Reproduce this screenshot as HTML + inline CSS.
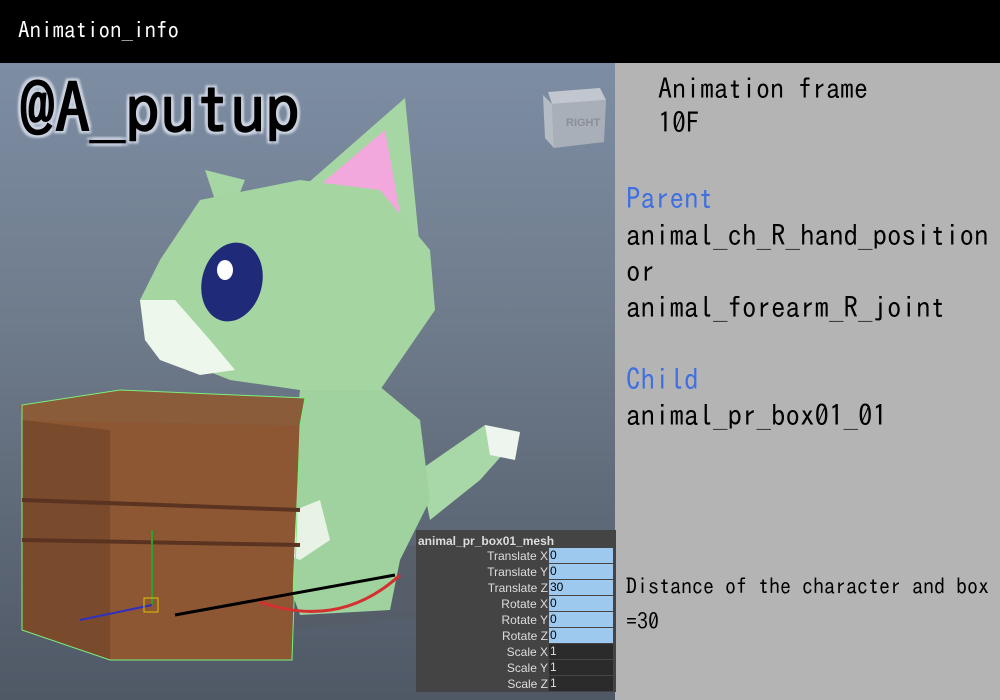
<!DOCTYPE html>
<html><head><meta charset="utf-8"><style>
*{margin:0;padding:0;box-sizing:border-box}
body{width:1000px;height:700px;overflow:hidden;background:#b4b4b4;font-family:"IPAGothic","Liberation Mono",monospace;position:relative}
#top{position:absolute;left:0;top:0;width:1000px;height:63px;background:#000;color:#fff;font-size:23px;line-height:60px;padding-left:18px}
#vp{position:absolute;left:0;top:63px;width:615px;height:637px;background:linear-gradient(#7d8da3,#6f7c8c 40%,#4f5865);overflow:hidden}
.t{position:absolute;white-space:nowrap;color:#000}
#attr{position:absolute;left:416px;top:530px;width:200px;height:162px;background:#444;font-family:"Liberation Sans",sans-serif;font-size:12px;color:#ddd}
.r{position:absolute;left:0;width:200px;height:16px}
.r span{position:absolute;right:68px;top:1px}
.r b{position:absolute;left:133px;top:0;width:64px;height:15px;line-height:15px;font-weight:normal;color:#000;padding-left:1px}
</style></head><body>
<div id="top">Animation_info</div>
<div id="vp">
<svg width="615" height="637" viewBox="0 63 615 637" style="position:absolute;left:0;top:0">
<polygon points="250,560 480,540 520,610 290,630" fill="#555c66" opacity=".6"/>
<polygon points="548,92 600,88 606,100 552,104" fill="#c2c7cf"/>
<polygon points="552,104 606,100 604,142 554,148" fill="#a9afb8"/>
<polygon points="543,95 552,104 554,148 545,138" fill="#b6bcc4"/>
<text x="566" y="126" font-family="Liberation Sans" font-size="11" font-weight="bold" fill="#8a9099">RIGHT</text>
<polygon points="420,470 485,425 520,435 480,480 430,520" fill="#a9d8a8"/>
<polygon points="485,425 520,432 515,460 490,455" fill="#eef5ee"/>
<polygon points="300,390 360,370 420,420 430,500 400,560 390,610 300,615 280,560 290,480" fill="#9fd29e"/>
<polygon points="270,520 320,500 330,540 300,560 275,550" fill="#e8f3e6"/>
<polygon points="300,190 405,98 420,250" fill="#a6d6a3"/>
<polygon points="320,185 385,130 405,240" fill="#f2a8dc"/>
<polygon points="205,170 245,180 225,230" fill="#a6d6a3"/>
<polygon points="160,260 200,200 300,180 380,190 430,250 435,310 380,390 300,390 230,380 180,360 145,340 140,300" fill="#a5d6a2"/>
<polygon points="140,300 175,300 210,340 235,370 200,375 160,360 145,340" fill="#eef7ec"/>
<ellipse cx="232" cy="282" rx="30" ry="40" fill="#1f2a78" transform="rotate(15 232 282)"/>
<ellipse cx="225" cy="270" rx="8" ry="10" fill="#fff"/>
<polygon points="20,405 120,390 305,398 300,425 22,420" fill="#8a5c3a"/>
<polygon points="22,420 300,425 293,580 292,660 110,660 22,630" fill="#8e5733"/>
<polygon points="22,420 110,430 110,660 22,630" fill="#7a4a2c"/>
<polyline points="22,630 22,405 120,390 305,398 300,425 292,660 110,660 22,630" fill="none" stroke="#7cf07c" stroke-width="1"/>
<line x1="22" y1="500" x2="300" y2="510" stroke="#5a3420" stroke-width="4"/>
<line x1="22" y1="540" x2="300" y2="545" stroke="#5a3420" stroke-width="4"/>
<path d="M260,602 Q340,630 400,575" stroke="#d53030" stroke-width="3" fill="none"/>
<path d="M175,615 L395,575" stroke="#000" stroke-width="3"/>
<line x1="152" y1="605" x2="152" y2="530" stroke="#2da02d" stroke-width="2"/>
<line x1="152" y1="605" x2="80" y2="620" stroke="#3030c0" stroke-width="2"/>
<rect x="144" y="598" width="14" height="14" fill="none" stroke="#e0c000"/>
</svg>
<div style="position:absolute;left:20px;top:10px;font-family:'IPAGothic','Liberation Mono',monospace;font-size:70px;color:#000;-webkit-text-stroke:1.5px #000;text-shadow:0 0 4px #ccd3e0,0 0 4px #ccd3e0,3px 3px 2px #ccd3e0,-3px -3px 2px #ccd3e0,3px -3px 2px #ccd3e0,-3px 3px 2px #ccd3e0">@A_putup</div>
</div>
<div id="attr">
<div style="position:absolute;left:2px;top:4px;font-weight:bold;font-size:12px;color:#ddd">animal_pr_box01_mesh</div>
<div class="r" style="top:18px"><span>Translate X</span><b style="background:#9dc9ee">0</b></div>
<div class="r" style="top:34px"><span>Translate Y</span><b style="background:#9dc9ee">0</b></div>
<div class="r" style="top:50px"><span>Translate Z</span><b style="background:#9dc9ee">30</b></div>
<div class="r" style="top:66px"><span>Rotate X</span><b style="background:#9dc9ee">0</b></div>
<div class="r" style="top:82px"><span>Rotate Y</span><b style="background:#9dc9ee">0</b></div>
<div class="r" style="top:98px"><span>Rotate Z</span><b style="background:#9dc9ee">0</b></div>
<div class="r" style="top:114px"><span>Scale X</span><b style="background:#2b2b2b;color:#ddd">1</b></div>
<div class="r" style="top:130px"><span>Scale Y</span><b style="background:#2b2b2b;color:#ddd">1</b></div>
<div class="r" style="top:146px"><span>Scale Z</span><b style="background:#2b2b2b;color:#ddd">1</b></div>
</div>
<div class="t" style="left:658px;top:75px;font-size:28px">Animation frame</div>
<div class="t" style="left:658px;top:109px;font-size:28px">10F</div>
<div class="t" style="left:626px;top:184px;font-size:29px;color:#3f6fe0">Parent</div>
<div class="t" style="left:626px;top:221px;font-size:29px">animal_ch_R_hand_position</div>
<div class="t" style="left:626px;top:257px;font-size:29px">or</div>
<div class="t" style="left:626px;top:293px;font-size:29px">animal_forearm_R_joint</div>
<div class="t" style="left:626px;top:365px;font-size:29px;color:#3f6fe0">Child</div>
<div class="t" style="left:626px;top:401px;font-size:29px">animal_pr_box01_01</div>
<div class="t" style="left:626px;top:575px;font-size:22px">Distance of the character and box</div>
<div class="t" style="left:626px;top:610px;font-size:22px">=30</div>
</body></html>
